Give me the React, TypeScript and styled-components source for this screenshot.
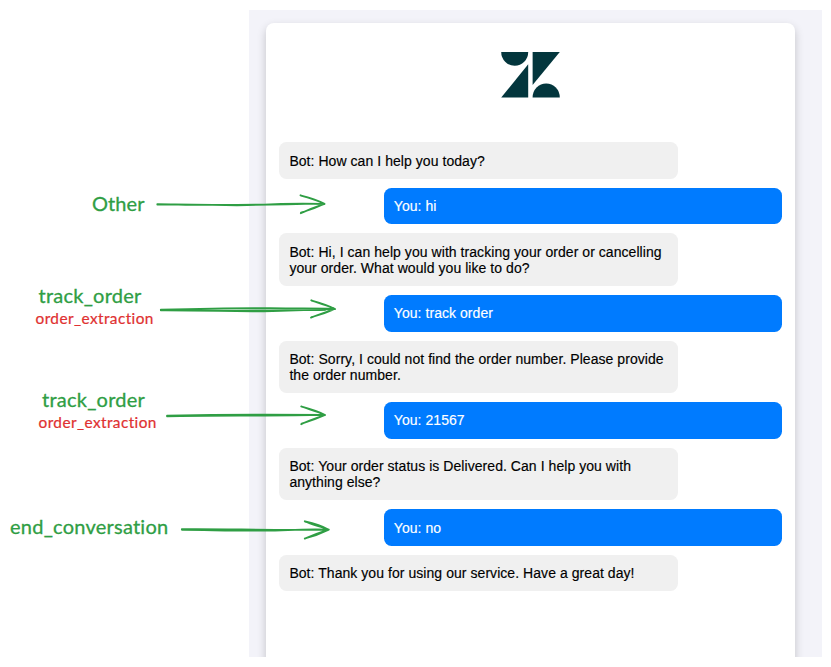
import React from "react";
import styled, { createGlobalStyle } from "styled-components";

const GlobalStyle = createGlobalStyle`
  *, *::before, *::after { box-sizing: border-box; }
  html, body { margin: 0; background: #fff; overflow: hidden; }
`;

const Canvas = styled.main`
  position: relative;
  width: 831px;
  height: 667px;
  padding: 10px 9px 10px 249px;
  overflow: hidden;
  background: #fff;
`;

const Backdrop = styled.section`
  height: 647px;
  width: 573px;
  padding: 13px 27px 0 16.8px;
  overflow: hidden;
  background: #f3f3f9;
`;

const ChatCard = styled.div`
  height: 700px;
  padding: 0 13px 0 13.4px;
  border-radius: 8px;
  background: #fff;
  box-shadow: 0 4px 10px rgba(0, 0, 0, 0.2);
`;

const Header = styled.header`
  display: flex;
  justify-content: center;
  height: 119.45px;
  padding: 28px 1px 0 0;
`;

const Messages = styled.div`
  display: flex;
  flex-direction: column;
  gap: 9.08px;
`;

const Bubble = styled.div<{ $user?: boolean }>`
  align-self: ${(p) => (p.$user ? "flex-end" : "flex-start")};
  width: 398.4px;
  padding: 10.18px 10.2px;
  border-radius: 7.5px;
  background: ${(p) => (p.$user ? "#007bff" : "#f0f0f0")};
  color: ${(p) => (p.$user ? "#fff" : "#000")};
  font: 14px/16.1px "Liberation Sans", Arial, sans-serif;
  letter-spacing: 0.055px;
  white-space: pre-line;
  -webkit-text-stroke: 0.15px currentColor;
`;

const Note = styled.span<{ $x: number; $y: number; $small?: boolean; $spacing: number }>`
  position: absolute;
  left: ${(p) => p.$x}px;
  top: ${(p) => p.$y}px;
  color: ${(p) => (p.$small ? "#e03131" : "#2f9e44")};
  font: ${(p) => (p.$small ? "15.4px/20px" : "20px/26px")} Lato, sans-serif;
  letter-spacing: ${(p) => p.$spacing}px;
  white-space: nowrap;
  -webkit-text-stroke: ${(p) => (p.$small ? 0.2 : 0.3)}px currentColor;
`;

const ArrowLayer = styled.svg`
  position: absolute;
  inset: 0;
  pointer-events: none;
  fill: none;
  stroke: #2f9e44;
  stroke-width: 1.8;
  stroke-linecap: round;
  stroke-linejoin: round;
`;

const messages = [
  { text: "Bot: How can I help you today?" },
  { user: true, text: "You: hi" },
  { text: "Bot: Hi, I can help you with tracking your order or cancelling\nyour order. What would you like to do?" },
  { user: true, text: "You: track order" },
  { text: "Bot: Sorry, I could not find the order number. Please provide\nthe order number." },
  { user: true, text: "You: 21567" },
  { text: "Bot: Your order status is Delivered. Can I help you with\nanything else?" },
  { user: true, text: "You: no" },
  { text: "Bot: Thank you for using our service. Have a great day!" },
];

const notes = [
  { text: "Other", x: 92, y: 190, spacing: 0.1 },
  { text: "track_order", x: 38.5, y: 282, spacing: 0.25 },
  { text: "order_extraction", x: 35.5, y: 308, spacing: 0.42, small: true },
  { text: "track_order", x: 42, y: 386, spacing: 0.25 },
  { text: "order_extraction", x: 38.5, y: 412, spacing: 0.42, small: true },
  { text: "end_conversation", x: 10, y: 513, spacing: 0.24 },
];

const Logo = () => (
  <svg width="60" height="48" viewBox="500 51 60 48" fill="#03363d" aria-label="Zendesk">
    <path d="M501.2 52H528.2A13.5 13.8 0 0 1 501.2 52Z" />
    <path d="M532.6 52H559.8L532.6 85Z" />
    <path d="M528.2 64.3V97.6H501.2Z" />
    <path d="M532.6 97.6A13.6 14.2 0 0 1 559.8 97.6Z" />
  </svg>
);

const Arrows = () => (
  <ArrowLayer width="831" height="667" viewBox="0 0 831 667">
    <path d="M157.3 204.1C194 205.3 251 205.2 324 203.7M157.3 204.5C207 203.6 225 206.4 258 204.8S305 203.3 324.5 204M300.5 195.3C309 198.2 317 199.9 324.5 203.8C315 207 307 210.3 300.8 213.2M301 195.6Q315 199 324.5 203.8Q314 209 301 212.7" />
    <path d="M160.8 309.7C200 308.6 235 307.8 270 308.2S311 308.2 335 308.8M160.8 310.3C218 310.1 245 312.7 288 310.6L335 309.1M166 309.7C210 311.8 270 309.5 325 310.2M311.3 300.3C319 303.7 328 305.3 335 309C325 312 317 315.2 311 317.6M311.7 300.6Q326 304.5 335 309Q324 314 311.5 317.2" />
    <path d="M167 415.6C211 414.7 266 414.2 324.8 415M167 416.3C216 415.4 270 416 324.8 414.9M301.2 406.5C309 409.5 317 411.1 325.1 415C317 417.7 307 421.1 301.2 424.2M301.7 406.7Q316 410.5 325.1 415Q314 420 301.7 423.6" />
    <path d="M181.8 529.2C226 528.7 271 530.6 328.5 529.6M182 529.8C207 529.7 239 531.4 275 530.5S311 528.7 328.5 529.7M304.8 521.2C312 524.8 320 526.1 328.8 529.7C320 532.5 311 536 304.8 538.6M305 521.5Q320 525 328.8 529.7Q317 535.5 305 538.4" />
  </ArrowLayer>
);

export default function App() {
  return (
    <Canvas>
      <GlobalStyle />
      <Backdrop>
        <ChatCard>
          <Header><Logo /></Header>
          <Messages>
            {messages.map((m) => (
              <Bubble key={m.text} $user={m.user}>{m.text}</Bubble>
            ))}
          </Messages>
        </ChatCard>
      </Backdrop>
      {notes.map((n) => (
        <Note key={`${n.text}-${n.y}`} $x={n.x} $y={n.y} $spacing={n.spacing} $small={n.small}>{n.text}</Note>
      ))}
      <Arrows />
    </Canvas>
  );
}
